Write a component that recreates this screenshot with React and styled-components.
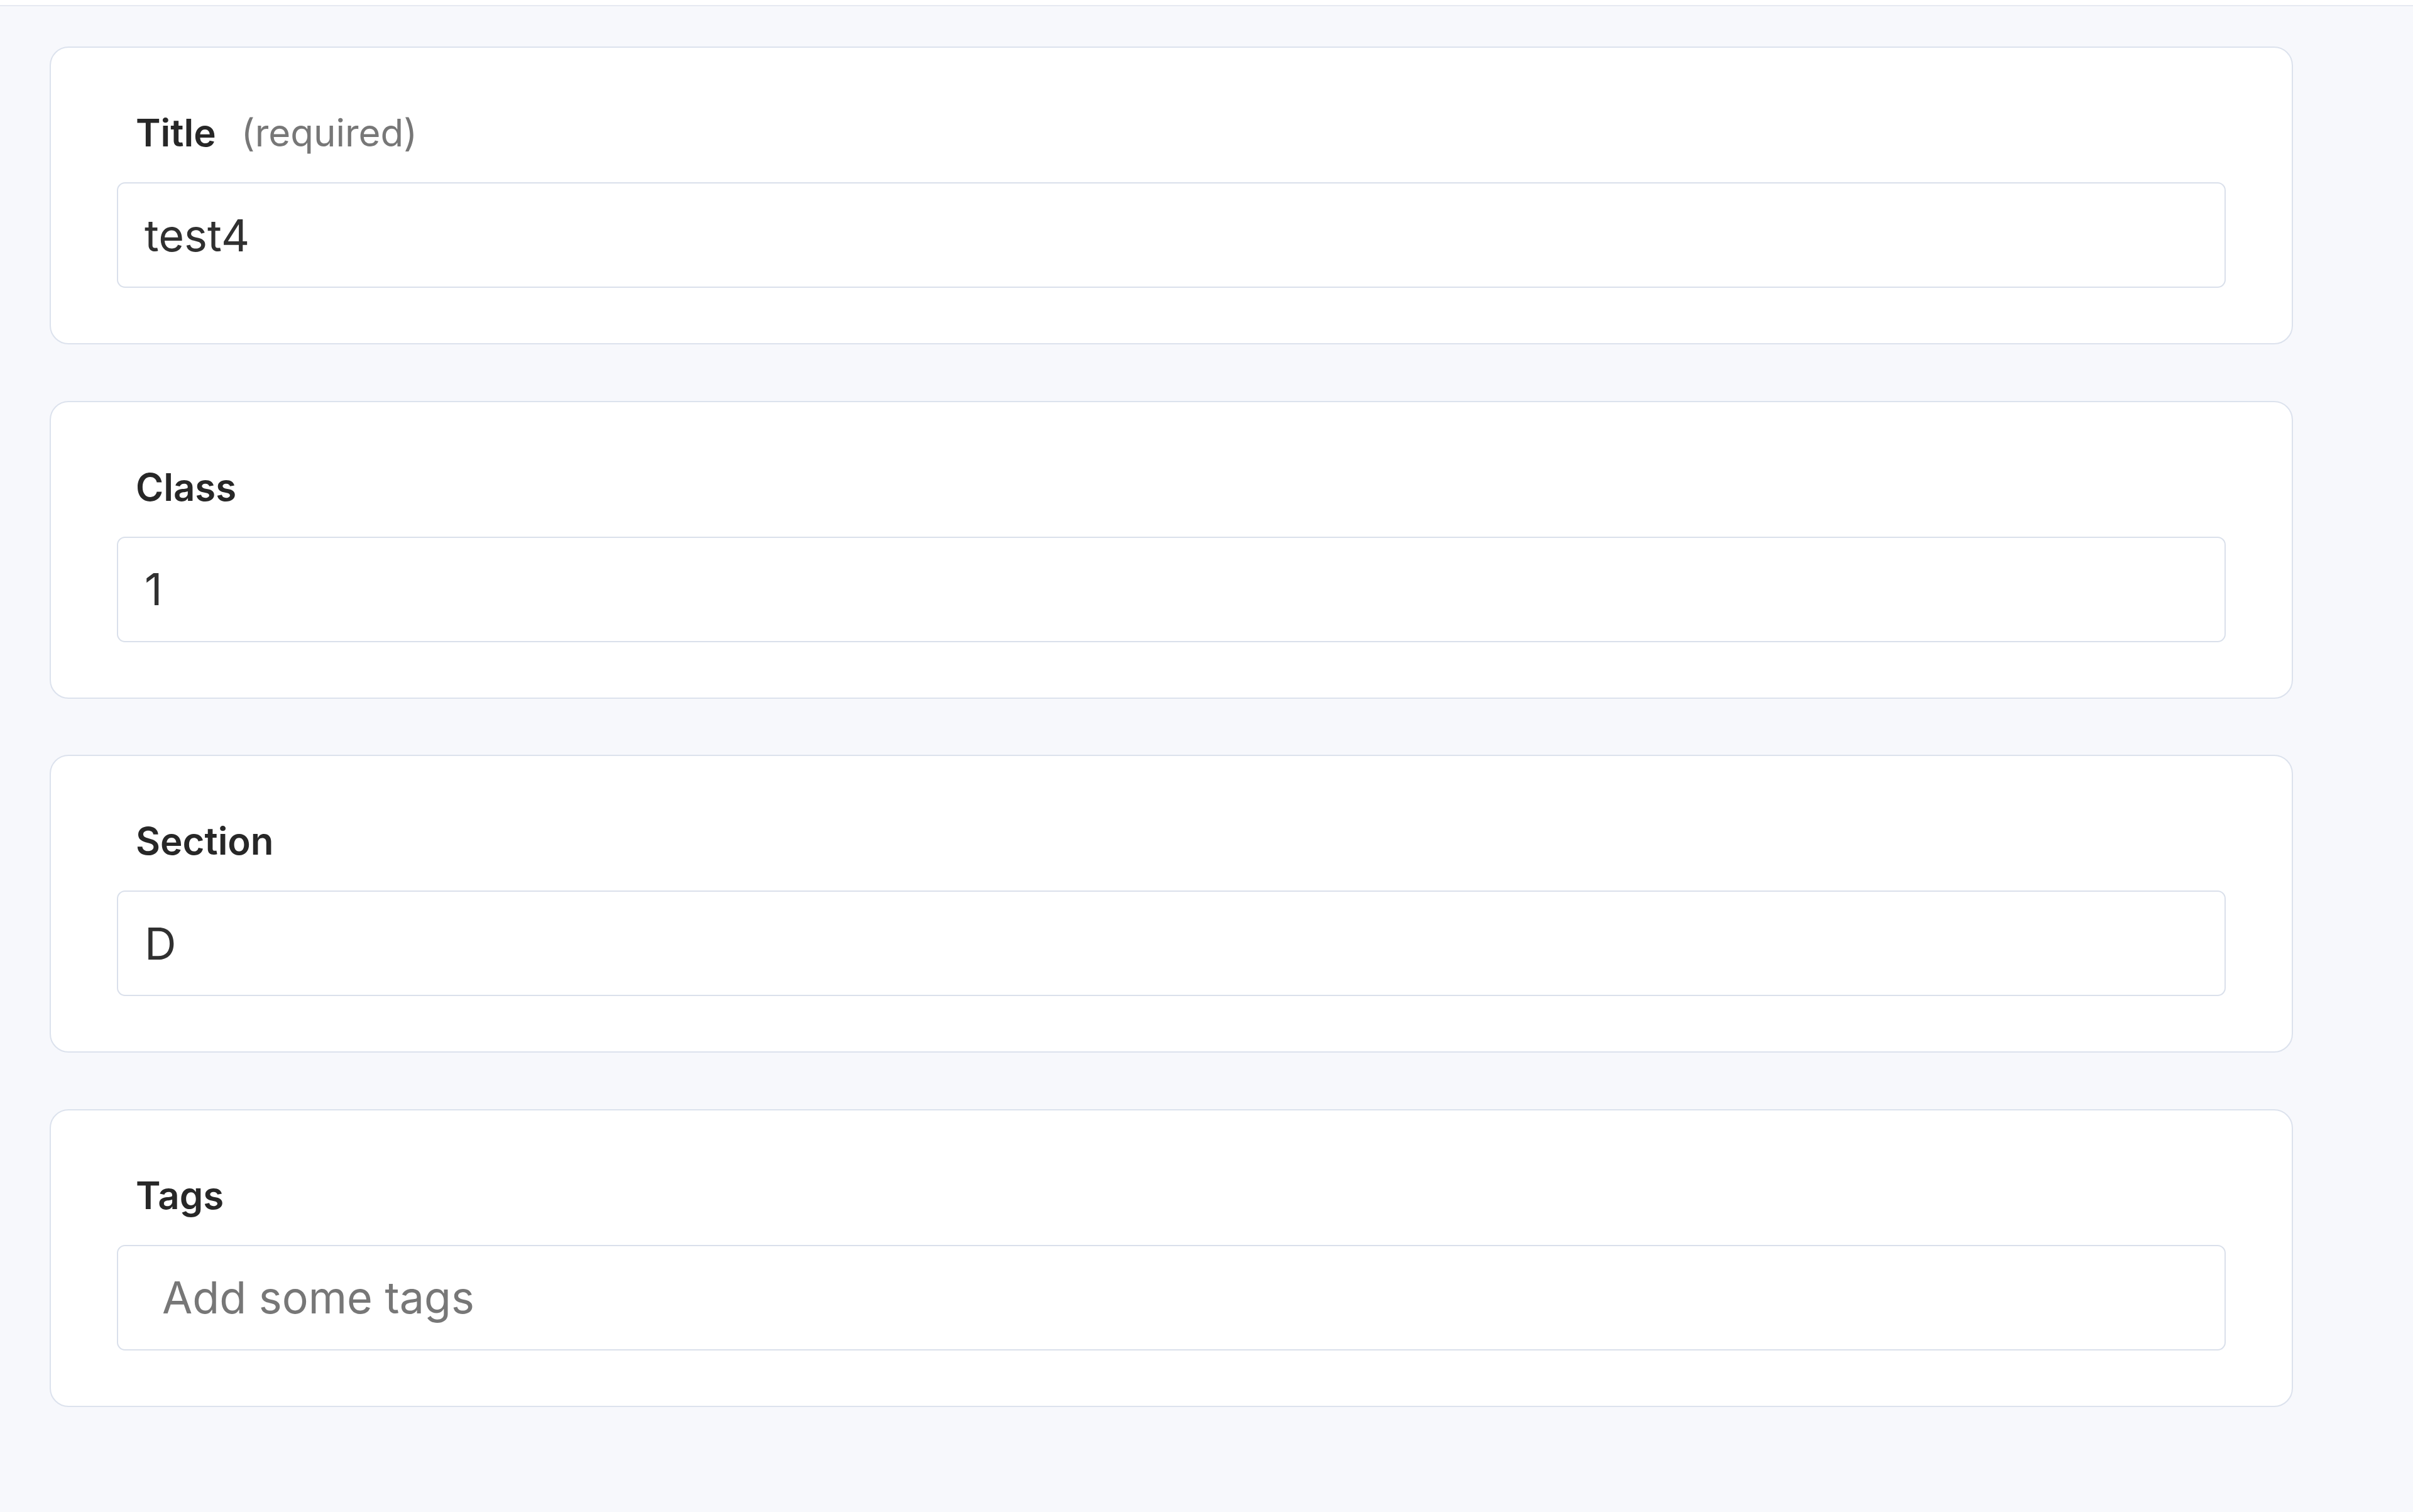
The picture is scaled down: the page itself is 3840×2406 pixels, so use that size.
import React from 'react';
import styled, { createGlobalStyle } from 'styled-components';

const GlobalStyle = createGlobalStyle`
  html, body {
    margin: 0;
    padding: 0;
    background: #f7f8fc;
    font-family: Inter, "Noto Sans", "Liberation Sans", sans-serif;
  }
  * { box-sizing: border-box; }
`

const TopBar = styled.div`
  height: 10px;
  background: #fff;
  border-bottom: 2px solid #e6e9f1;
`

const Page = styled.div`
  min-height: 2394px;
  background: #f7f8fc;
  padding: 64px 0 0 79px;
`

const Form = styled.form`
  width: 3570px;
  display: flex;
  flex-direction: column;
  gap: 89.5px;
`

const Card = styled.div`
  background: #fff;
  border: 2px solid #dce2ed;
  border-radius: 30px;
  padding: 99px 105px 88px;
  display: flex;
  flex-direction: column;
`

const Label = styled.label`
  display: flex;
  align-items: baseline;
  padding-left: 30px;
  margin-bottom: 43px;
  font-size: 60px;
  line-height: 72px;
  font-weight: 600;
  color: #272727;
`

const Hint = styled.span`
  margin-left: 40px;
  font-weight: 400;
  color: #777;
`

const Input = styled.input`
  width: 100%;
  height: 168px;
  margin: 0;
  border: 2px solid #dae0eb;
  border-radius: 13px;
  background: #fff;
  padding: 0 ${p => (p.$tags ? '70px' : '42px')};
  font-family: Inter, "Noto Sans", "Liberation Sans", sans-serif;
  font-size: 70px;
  font-weight: 400;
  color: #303030;
  outline: none;

  &::placeholder {
    color: #777;
    opacity: 1;
  }
`

const fields = [
  { name: 'title', label: 'Title', hint: '(required)', value: 'test4' },
  { name: 'class', label: 'Class', value: '1' },
  { name: 'section', label: 'Section', value: 'D' },
  { name: 'tags', label: 'Tags', placeholder: 'Add some tags', tags: true },
];

class App extends React.Component {
  constructor() {
    super();
    this.state = { title: 'test4', class: '1', section: 'D', tags: '' };
  }

  render() {
    return (
      <>
        <GlobalStyle />
        <TopBar />
        <Page>
          <Form onSubmit={e => { e.preventDefault(); }}>
            { fields.map(f => (
              <Card key={f.name}>
                <Label htmlFor={f.name}>
                  {f.label}
                  { f.hint && <Hint>{f.hint}</Hint> }
                </Label>
                <Input
                  id={f.name}
                  $tags={f.tags}
                  placeholder={f.placeholder}
                  value={this.state[f.name]}
                  onChange={e => this.setState({ [f.name]: e.target.value })}
                />
              </Card>
            )) }
          </Form>
        </Page>
      </>
    );
  }
}

export default App;
